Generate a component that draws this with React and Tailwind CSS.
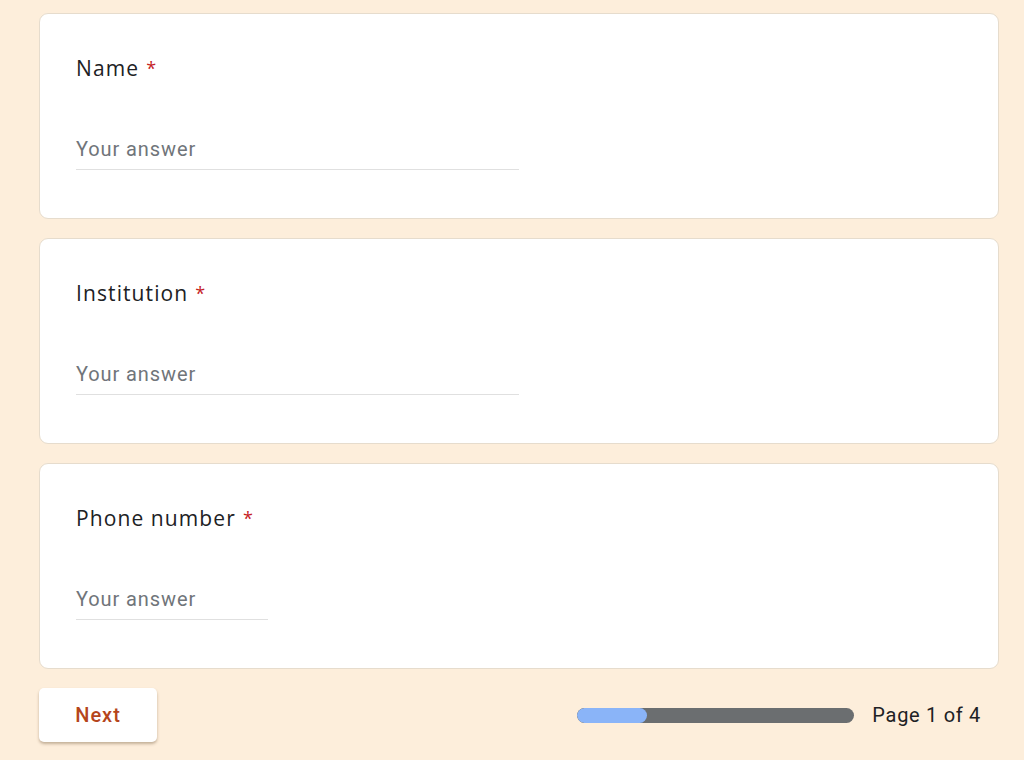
export default function App() {
  const questions = [
    { title: "Name", w: "w-[443px]" },
    { title: "Institution", w: "w-[443px]" },
    { title: "Phone number", w: "w-[192px]" },
  ];
  return (
    <div className="w-[1024px] h-[760px] bg-[#fdeedb] overflow-hidden" style={{ fontFamily: "Roboto, 'Noto Sans', sans-serif" }}>
      <div className="pt-[13px] pl-[39px] w-[999px] flex flex-col gap-[19px]">
        {questions.map((q) => (
          <div key={q.title} className="h-[206px] bg-white border border-[#e6dccd] rounded-[9px] pl-[36px] pt-[40px]">
            <div className="text-[21px] leading-[28px] text-[#202124] flex tracking-[1.1px]" style={{ fontFamily: "'Open Sans', Roboto, sans-serif" }}>
              <span>{q.title}</span>
              <span className="text-[#c5221f] ml-[7px] text-[18px]">*</span>
            </div>
            <div className={`mt-[55px] ${q.w} border-b border-[#e0e0e0] pb-[8px] text-[20px] tracking-[0.9px] leading-[24px] text-[#70757a]`}>
              Your answer
            </div>
          </div>
        ))}
        <div className="flex items-center justify-between pr-[18px]">
          <button className="w-[118px] h-[54px] bg-white rounded-[5px] shadow-[0_2px_3px_rgba(90,60,30,0.35)] text-[#b5451b] text-[20px] font-medium tracking-[1px]">
            Next
          </button>
          <div className="flex items-center">
            <div className="w-[277px] h-[15px] rounded-full bg-[#6b6e70] overflow-hidden">
              <div className="w-[70px] h-full rounded-full bg-[#8ab4f8]" />
            </div>
            <span className="ml-[18px] text-[20px] tracking-[0.7px] text-[#202124]">Page 1 of 4</span>
          </div>
        </div>
      </div>
    </div>
  );
}
